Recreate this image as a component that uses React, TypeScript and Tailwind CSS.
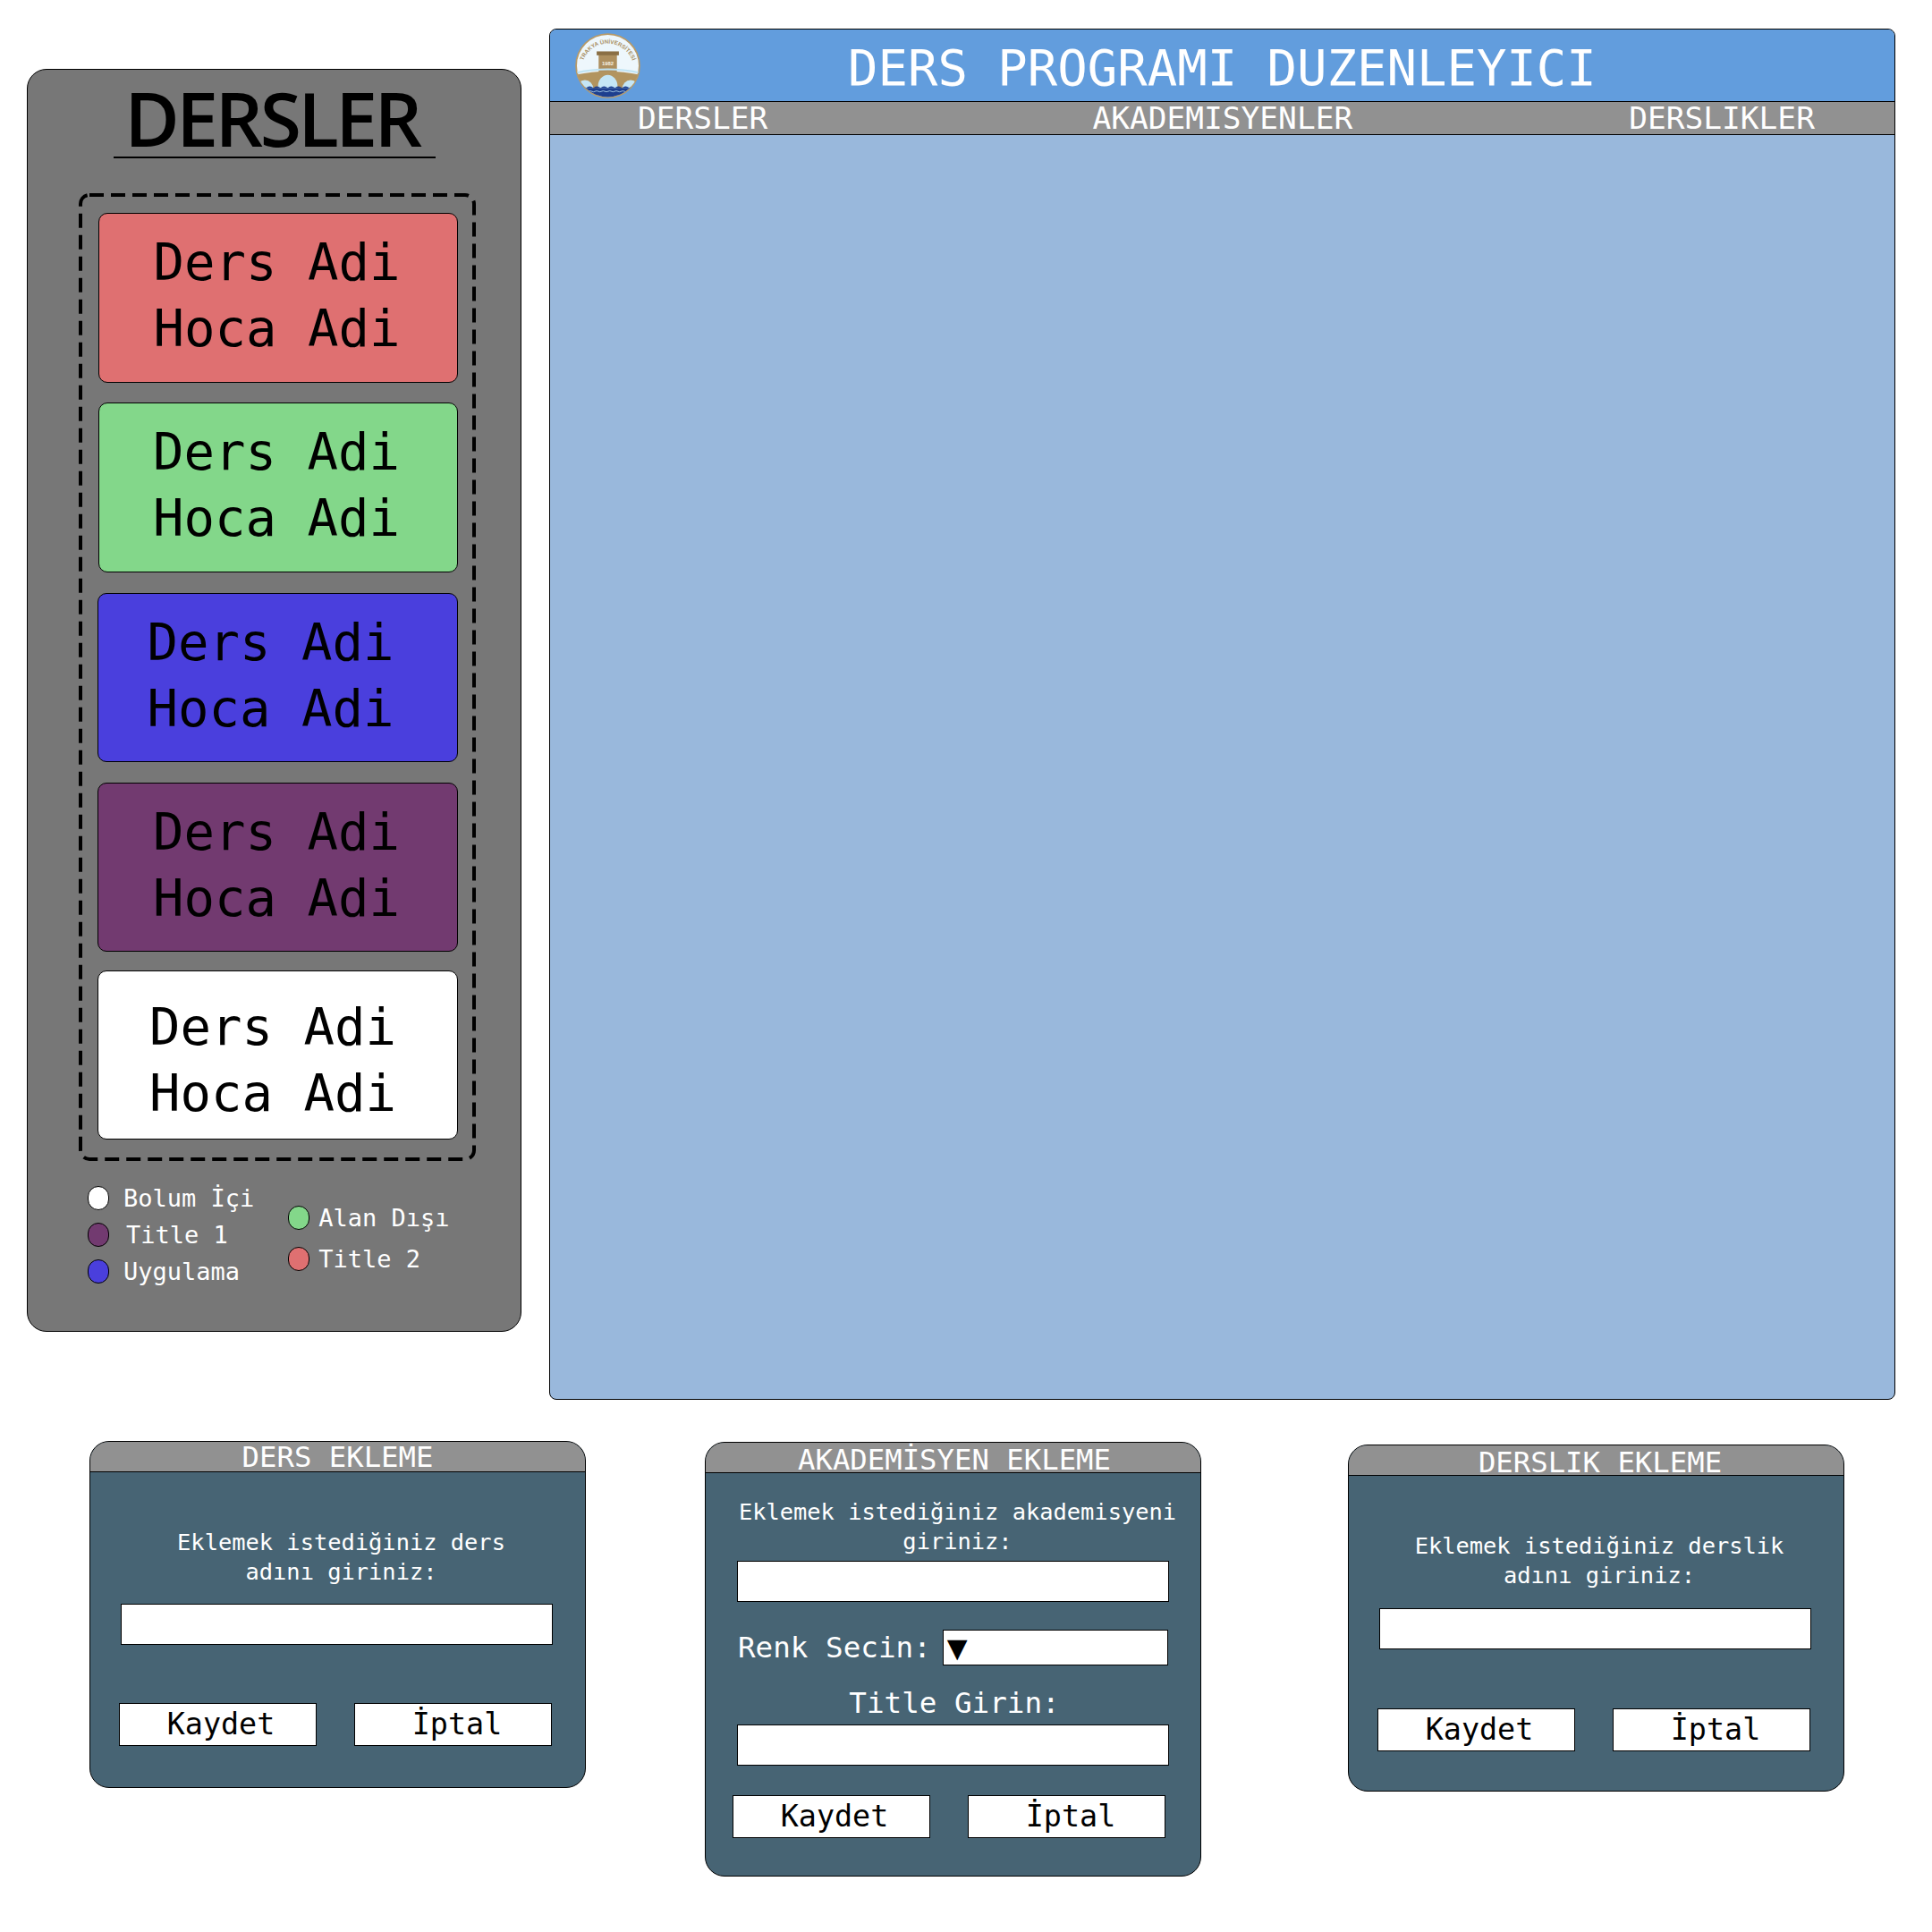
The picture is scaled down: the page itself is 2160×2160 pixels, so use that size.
import type { ReactNode } from "react";

const mono = "font-['DejaVu_Sans_Mono','Liberation_Mono',monospace]";

const cards = [
  { bg: "bg-[#df7071]", box: "ml-[22px] w-[402px] h-[190px] mt-[21px]", text: "pr-[3px] pb-[4px]" },
  { bg: "bg-[#83d78a]", box: "ml-[22px] w-[402px] h-[190px] mt-[22px]", text: "pr-[4px] pb-[4px]" },
  { bg: "bg-[#4a3fdd]", box: "ml-[21px] w-[403px] h-[189px] mt-[23px]", text: "pr-[16px] pb-[4px]" },
  { bg: "bg-[#723a70]", box: "ml-[21px] w-[403px] h-[189px] mt-[23px]", text: "pr-[3px] pb-[4px]" },
  { bg: "bg-white", box: "ml-[21px] w-[403px] h-[189px] mt-[21px]", text: "pr-[11px] pt-[12px]" },
];

const TrakyaLogo = () => (
  <svg viewBox="0 0 100 100" className="w-[73px] h-[73px] shrink-0">
    <defs>
      <path id="logoArc" d="M 10 56 A 40 40 0 0 1 90 56" />
      <clipPath id="logoClip">
        <circle cx="50" cy="50" r="48" />
      </clipPath>
    </defs>
    <circle cx="50" cy="50" r="48.5" fill="#eef7fc" stroke="#b79a69" strokeWidth="2.5" />
    <g clipPath="url(#logoClip)">
      <rect x="36" y="33" width="28" height="26" fill="#ad8f5f" />
      <rect x="33" y="28" width="34" height="6" fill="#8a6f45" />
      <path d="M0 64 Q50 53 100 64 V100 H0 Z" fill="#b2945f" />
      <path d="M0 61 Q50 50 100 61" stroke="#bfe3f3" strokeWidth="3" fill="none" />
      <path d="M2 100 V86 A12 13 0 0 1 28 86 V100 Z" fill="#c4e6f6" />
      <path d="M35 100 V82 A15 18 0 0 1 65 82 V100 Z" fill="#c4e6f6" />
      <path d="M72 100 V86 A12 13 0 0 1 98 86 V100 Z" fill="#c4e6f6" />
      <rect x="0" y="84" width="100" height="16" fill="#1d3f8f" />
      <path d="M6 84 q5 -5 11 0 q5 -5 11 0 q5 -5 11 0 q5 -5 11 0 q5 -5 11 0 q5 -5 11 0 q5 -5 11 0 q5 -5 11 0" fill="#1d3f8f" />
      <path d="M8 90 q5 -3 10 0 q5 -3 10 0 q5 -3 10 0 q5 -3 10 0 q5 -3 10 0 q5 -3 10 0 q5 -3 10 0 q5 -3 10 0" stroke="#a9cfe8" strokeWidth="1.2" fill="none" />
    </g>
    <text fontSize="8.5" fontWeight="700" fill="#a98f62" fontFamily="'Liberation Sans', sans-serif" letterSpacing="0.1">
      <textPath href="#logoArc" startOffset="50%" textAnchor="middle">
        TRAKYA ÜNİVERSİTESİ
      </textPath>
    </text>
    <text x="50" y="49" fontSize="8" fontWeight="700" fill="#f7f2e4" textAnchor="middle" fontFamily="'Liberation Sans', sans-serif">
      1982
    </text>
  </svg>
);

const Dot = ({ color }: { color: string }) => (
  <span className={`w-[24px] h-[27px] rounded-full border border-black shrink-0 ${color}`} />
);

const LegendItem = ({ color, label, gap }: { color: string; label: string; gap: string }) => (
  <div className="flex items-center h-[27px]">
    <Dot color={color} />
    <span className={`text-white text-[27px] leading-[27px] whitespace-pre ${gap}`}>{label}</span>
  </div>
);

const Field = ({ className = "" }: { className?: string }) => (
  <div className={`h-[46px] w-[483px] bg-white border border-black ${className}`} />
);

const Buttons = ({ className = "" }: { className?: string }) => (
  <div className={`flex gap-[42px] text-[33.4px] leading-none text-black ${className}`}>
    <div className="w-[221px] h-[48px] bg-white border border-black flex items-center justify-center pl-[7px]">Kaydet</div>
    <div className="w-[221px] h-[48px] bg-white border border-black flex items-center justify-center pl-[9px]">İptal</div>
  </div>
);

const Modal = ({ title, className, titleClass = "", children }: { title: string; className: string; titleClass?: string; children: ReactNode }) => (
  <div className={`w-[555px] shrink-0 rounded-[22px] border border-black bg-[#476474] overflow-hidden ${className}`}>
    <div className={`h-[34px] bg-[#919191] border-b border-black text-white text-[32.3px] leading-[34px] text-center whitespace-pre ${titleClass}`}>
      {title}
    </div>
    {children}
  </div>
);

export default function App() {
  return (
    <div className={`w-[2160px] h-[2160px] bg-white overflow-hidden ${mono}`}>
      <div className="flex items-start pl-[30px] pt-[32px]">
        <aside className="w-[553px] h-[1412px] mt-[45px] shrink-0 bg-[#777777] border border-black rounded-[22px]">
          <h1 className="mt-[12px] text-center font-['Open_Sans',sans-serif] font-semibold text-[84px] leading-[84px] tracking-[-3.6px] text-black pr-[5px]">
            DERSLER
          </h1>
          <div className="ml-[96px] w-[360px] h-[2px] bg-black mt-[1px]" />
          <div className="relative ml-[57px] mt-[39px] w-[444px] h-[1082px] pt-[1px]">
            <svg className="absolute inset-0 w-full h-full" viewBox="0 0 444 1082" fill="none">
              <rect x="2" y="2" width="440" height="1078" rx="10" stroke="black" strokeWidth="4" strokeDasharray="16 8" />
            </svg>
            {cards.map((c, i) => (
              <div
                key={i}
                className={`${c.box} ${c.bg} relative rounded-[10px] border border-black flex items-center justify-center text-center text-black text-[57.3px] leading-[74px]`}
              >
                <div className={c.text}>
                  Ders Adi
                  <br />
                  Hoca Adi
                </div>
              </div>
            ))}
          </div>
          <div className="flex items-center ml-[67px] mt-[28px]">
            <div className="flex flex-col gap-[14px]">
              <LegendItem color="bg-white" label="Bolum İçi" gap="ml-[16px]" />
              <LegendItem color="bg-[#723a70]" label="Title 1" gap="ml-[19px]" />
              <LegendItem color="bg-[#4a3fdd]" label="Uygulama" gap="ml-[16px]" />
            </div>
            <div className="flex flex-col gap-[19px] ml-[38px] mt-[8px]">
              <LegendItem color="bg-[#83d78a]" label="Alan Dışı" gap="ml-[10px]" />
              <LegendItem color="bg-[#df7071]" label="Title 2" gap="ml-[10px]" />
            </div>
          </div>
        </aside>

        <main className="ml-[31px] w-[1505px] h-[1533px] shrink-0 bg-[#99b8dc] border border-black rounded-[8px] overflow-hidden">
          <div className="h-[81px] bg-[#629ddd] border-b border-black flex items-center">
            <div className="ml-[28px]">
              <TrakyaLogo />
            </div>
            <div className="ml-[232px] mt-[6px] text-[55.6px] leading-none text-white whitespace-pre">DERS PROGRAMI DUZENLEYICI</div>
          </div>
          <div className="h-[37px] bg-[#919191] border-b border-black flex items-center text-white text-[34.5px] leading-none">
            <span className="ml-[98px]">DERSLER</span>
            <span className="ml-[363px]">AKADEMISYENLER</span>
            <span className="ml-[309px]">DERSLIKLER</span>
          </div>
        </main>
      </div>

      <div className="flex items-start pl-[100px] mt-[46px]">
        <Modal title="DERS EKLEME" className="h-[388px]">
          <p className="mt-[62px] text-center text-white text-[25.4px] leading-[33px] pl-[8px]">
            Eklemek istediğiniz ders
            <br />
            adını giriniz:
          </p>
          <Field className="ml-[34px] mt-[19px]" />
          <Buttons className="ml-[32px] mt-[65px]" />
        </Modal>

        <Modal title="AKADEMİSYEN EKLEME" className="h-[486px] ml-[133px] mt-[1px]" titleClass="pt-[2px] pl-[3px]">
          <p className="mt-[27px] text-center text-white text-[25.4px] leading-[33px] pl-[10px] whitespace-pre">
            Eklemek istediğiniz akademisyeni
            <br />
            giriniz:
          </p>
          <Field className="ml-[35px] mt-[5px]" />
          <div className="flex items-center ml-[36px] mt-[31px] text-white text-[32.6px] leading-none">
            <span>Renk Secin:</span>
            <div className="ml-[13px] w-[252px] h-[40px] bg-white border border-black text-black text-[38px] flex items-center pl-[4px]">▼</div>
          </div>
          <p className="mt-[23px] text-center text-white text-[32.6px] leading-[38px] pl-[3px]">Title Girin:</p>
          <Field className="ml-[35px] mt-[5px]" />
          <Buttons className="ml-[30px] mt-[33px]" />
        </Modal>

        <Modal title="DERSLIK EKLEME" className="h-[388px] ml-[164px] mt-[4px]" titleClass="pl-[9px] pt-[2px]">
          <p className="mt-[62px] text-center text-white text-[25.4px] leading-[33px] pl-[7px]">
            Eklemek istediğiniz derslik
            <br />
            adını giriniz:
          </p>
          <Field className="ml-[34px] mt-[20px]" />
          <Buttons className="ml-[32px] mt-[66px]" />
        </Modal>
      </div>
    </div>
  );
}
